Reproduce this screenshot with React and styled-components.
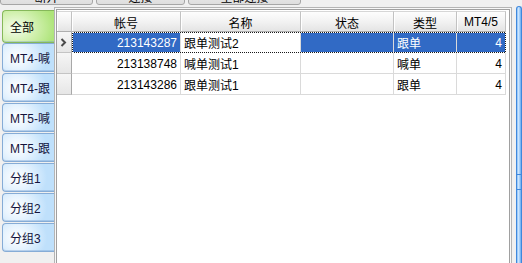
import styled, { createGlobalStyle } from "styled-components"

const GlobalStyle = createGlobalStyle`
    html, body {
        margin: 0;
        padding: 0;
        background: #f0f0f0;
        overflow: hidden;
    }
    body {
        font-family: "Liberation Sans", "Noto Sans CJK SC", sans-serif;
        font-size: 12px;
        color: #000;
    }
`

const tabs = ['全部', 'MT4-喊', 'MT4-跟', 'MT5-喊', 'MT5-跟', '分组1', '分组2', '分组3']

const columns = [
    { title: '', width: 15 },
    { title: '帐号', width: 109, align: 'right' },
    { title: '名称', width: 120, align: 'left' },
    { title: '状态', width: 93, align: 'left' },
    { title: '类型', width: 63, align: 'left' },
    { title: 'MT4/5', width: 49, align: 'right' },
]

const rows = [
    { id: '213143287', name: '跟单测试2', state: '', type: '跟单', mt: '4', selected: true },
    { id: '213138748', name: '喊单测试1', state: '', type: '喊单', mt: '4' },
    { id: '213143286', name: '跟单测试1', state: '', type: '跟单', mt: '4' },
]

const template = columns.map((c) => c.width + 'px').join(' ')

const App = () => {
    return (
        <Page>
            <GlobalStyle />
            <TopBar>
                <TopButton $w={93}>断开</TopButton>
                <TopButton $w={89}>连接</TopButton>
                <TopButton $w={113}>全部连接</TopButton>
            </TopBar>
            <Main>
                <TabColumn>
                    {tabs.map((t, i) => (
                        <Tab key={t} $active={i === 0}>{t}</Tab>
                    ))}
                </TabColumn>
                <GridFrame>
                    <GridBox>
                        <HeaderRow>
                            {columns.map((c, i) => (
                                <HeaderCell key={i}>{c.title}</HeaderCell>
                            ))}
                        </HeaderRow>
                        {rows.map((r) => (
                            <Row key={r.id} $selected={r.selected}>
                                <RowHead>
                                    {r.selected && (
                                        <svg width="7" height="9" viewBox="0 0 7 9">
                                            <polyline points="1.5,1 5,4.5 1.5,8" fill="none" stroke="#4a4a4a" strokeWidth="2" />
                                        </svg>
                                    )}
                                </RowHead>
                                <Cell $align="right" $sel={r.selected}>{r.id}</Cell>
                                <Cell $align="left">{r.name}</Cell>
                                <Cell $align="left" $sel={r.selected}>{r.state}</Cell>
                                <Cell $align="left" $sel={r.selected}>{r.type}</Cell>
                                <Cell $align="right" $sel={r.selected}>{r.mt}</Cell>
                            </Row>
                        ))}
                    </GridBox>
                </GridFrame>
                <ScrollTrack>
                    <ScrollGrip />
                </ScrollTrack>
            </Main>
        </Page>
    )
}

export default App

const Page = styled.div`
    width: 522px;
    height: 263px;
    display: flex;
    flex-direction: column;
    overflow: hidden;
`

const TopBar = styled.div`
    height: 5px;
    display: flex;
    gap: 3px;
    align-items: flex-end;
    overflow: hidden;
    flex-shrink: 0;
`

const TopButton = styled.div`
    width: ${(p) => p.$w}px;
    height: 20px;
    flex-shrink: 0;
    box-sizing: border-box;
    border: 1px solid #a6a6a6;
    border-radius: 3px;
    background: linear-gradient(#f2f2f2, #dedede);
    display: flex;
    align-items: flex-start;
    justify-content: center;
    padding-top: 2px;
    font-size: 12px;
`

const Main = styled.div`
    flex: 1;
    display: flex;
    min-height: 0;
`

const TabColumn = styled.div`
    width: 52px;
    padding: 5px 0 0 2px;
    display: flex;
    flex-direction: column;
    gap: 1px;
    flex-shrink: 0;
`

const Tab = styled.div`
    height: ${(p) => (p.$active ? 33 : 29)}px;
    margin-bottom: ${(p) => (p.$active ? -1 : 0)}px;
    box-sizing: border-box;
    border: 1px solid ${(p) => (p.$active ? '#86b85a' : '#86acd6')};
    border-right: none;
    border-radius: 4px 0 0 4px;
    padding-left: 7px;
    display: flex;
    align-items: center;
    color: ${(p) => (p.$active ? '#000' : '#14143c')};
    background: ${(p) =>
        p.$active
            ? 'radial-gradient(ellipse 40px 30px at 12px 55%, #f6fcef 0%, #d6f2b6 45%, #aee47a 100%)'
            : 'radial-gradient(ellipse 30px 26px at 14px 50%, #ffffff 0%, #e6f3fe 45%, #bfe0fb 100%)'};
    box-shadow: inset 0 -1px 0 rgba(110, 150, 200, 0.35);
`

const GridFrame = styled.div`
    width: 454px;
    margin-top: 2px;
    border: 1px solid #b4b4b4;
    border-bottom: none;
    padding: 1px 1px 0 1px;
    background: #f8f8f8;
    flex-shrink: 0;
    display: flex;
`

const GridBox = styled.div`
    flex: 1;
    border: 1px solid #a0a0a0;
    border-bottom: none;
    background: #fff;
    padding-top: 1px;
`

const HeaderRow = styled.div`
    display: grid;
    grid-template-columns: ${template};
    height: 21px;
`

const HeaderCell = styled.div`
    box-sizing: border-box;
    border-right: 1px solid #c2c2c2;
    border-bottom: 1px solid #aeaeae;
    border-top: 1px solid #d6d6d6;
    background: linear-gradient(#fdfdfd, #f1f1f1 55%, #e4e4e4);
    box-shadow: inset 1px 0 0 #fff;
    display: flex;
    align-items: center;
    justify-content: center;
    padding-top: 1px;
`

const Row = styled.div`
    display: grid;
    grid-template-columns: ${template};
    height: 21px;
    position: relative;

    ${(p) =>
        p.$selected &&
        `
        &::before, &::after {
            content: '';
            position: absolute;
            left: 15px;
            top: 0;
            width: 434px;
            height: 21px;
            box-sizing: border-box;
            pointer-events: none;
        }
        &::before { border: 1px solid #1a1a1a; }
        &::after { border: 1px dotted #ffffff; }
    `}
`

const RowHead = styled.div`
    box-sizing: border-box;
    border-right: 1px solid #a8a8a8;
    border-bottom: 1px solid #c4c4c4;
    background: linear-gradient(#f6f6f6, #e6e6e6);
    display: flex;
    align-items: center;
    padding-left: 3px;
`

const Cell = styled.div`
    box-sizing: border-box;
    border-right: 1px solid #dadada;
    border-bottom: 1px solid #dadada;
    display: flex;
    align-items: center;
    justify-content: ${(p) => (p.$align === 'right' ? 'flex-end' : 'flex-start')};
    padding: 1px 3px 0 3px;
    white-space: nowrap;
    background: ${(p) => (p.$sel ? '#316ac5' : '#fff')};
    color: ${(p) => (p.$sel ? '#fff' : '#000')};
`

const ScrollTrack = styled.div`
    flex: 0 0 6px;
    margin: 1px 0 0 4px;
    box-sizing: border-box;
    border: 1px solid #3f88dc;
    border-bottom: none;
    border-radius: 4px 4px 0 0;
    background: linear-gradient(to right, #86bff6, #cfe7ff 40%, #68acf1);
    position: relative;
`

const ScrollGrip = styled.div`
    position: absolute;
    left: 0;
    right: 0;
    top: 167px;
    height: 14px;
    border-top: 1px solid #3f88dc;
    border-bottom: 1px solid #3f88dc;
`
